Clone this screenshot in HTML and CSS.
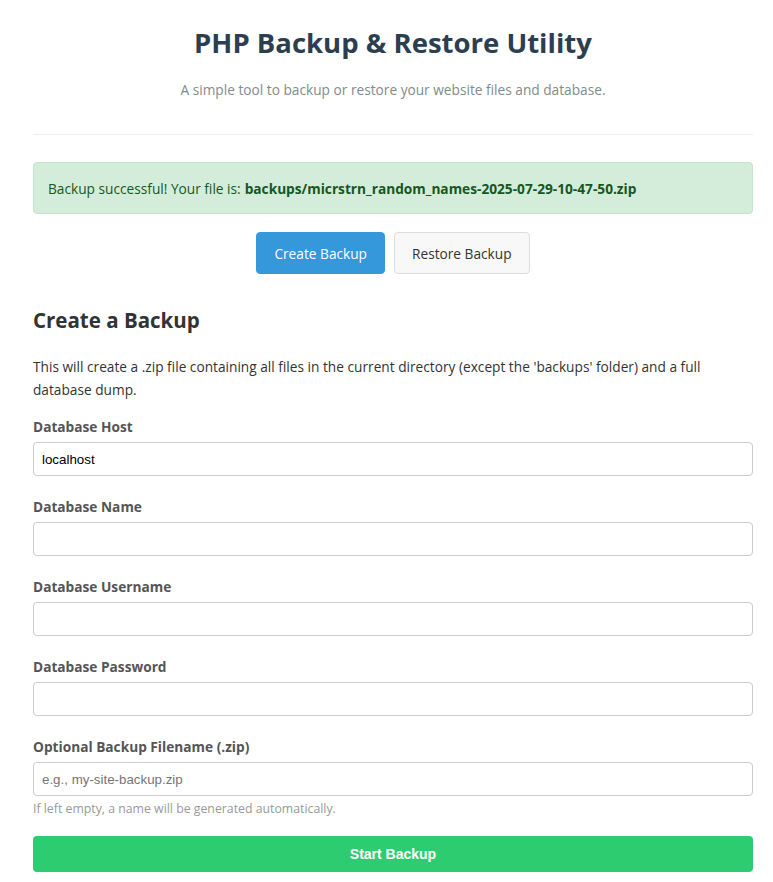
FILE: index.html
```html
<!DOCTYPE html>
<html lang="en">
<head>
<meta charset="utf-8">
<title>PHP Backup &amp; Restore Utility</title>
<link rel="stylesheet" href="styles.css">
</head>
<body>
<div class="container">
  <header class="header">
    <h1 class="title">PHP Backup &amp; Restore Utility</h1>
    <p class="subtitle">A simple tool to backup or restore your website files and database.</p>
  </header>

  <div class="alert">Backup successful! Your file is: <strong>backups/micrstrn_random_names-2025-07-29-10-47-50.zip</strong></div>

  <div class="tabs">
    <button class="tab tab-active" type="button">Create Backup</button>
    <button class="tab" type="button">Restore Backup</button>
  </div>

  <section class="panel">
    <h2 class="panel-title">Create a Backup</h2>
    <p class="panel-desc">This will create a .zip file containing all files in the current directory (except the 'backups' folder) and a full database dump.</p>
    <form class="form">
      <div class="field">
        <label class="label" for="host">Database Host</label>
        <input class="input" id="host" type="text" value="localhost">
      </div>
      <div class="field">
        <label class="label" for="name">Database Name</label>
        <input class="input" id="name" type="text">
      </div>
      <div class="field">
        <label class="label" for="user">Database Username</label>
        <input class="input" id="user" type="text">
      </div>
      <div class="field">
        <label class="label" for="pass">Database Password</label>
        <input class="input" id="pass" type="password">
      </div>
      <div class="field field-last">
        <label class="label" for="file">Optional Backup Filename (.zip)</label>
        <input class="input" id="file" type="text" placeholder="e.g., my-site-backup.zip">
        <small class="hint">If left empty, a name will be generated automatically.</small>
      </div>
      <button class="submit" type="button">Start Backup</button>
    </form>
  </section>
</div>
</body>
</html>
```
FILE: styles.css
```css
* { box-sizing: border-box; }
html, body { margin: 0; background: #fff; }
body {
  font-family: "Open Sans", "Noto Sans", sans-serif;
  color: #333;
  font-size: 13.7px;
}
.container {
  padding: 0 20px 0 33px;
}
.header {
  text-align: center;
  padding-top: 24px;
  padding-bottom: 34px;
  border-bottom: 1px solid #eee;
}
.title {
  margin: 0;
  font-size: 27.5px;
  font-weight: 700;
  color: #2c3e50;
  line-height: 38px;
}
.subtitle {
  margin: 18px 0 0;
  color: #7f8c8d;
  font-size: 13.7px;
  line-height: 20px;
}
.alert {
  margin-top: 27px;
  background: #d4edda;
  border: 1px solid #c3e6cb;
  color: #155724;
  border-radius: 4px;
  padding: 0 14px;
  height: 52px;
  display: flex;
  align-items: center;
  font-size: 13.7px;
}
.alert strong { margin-left: 4px; }
.tabs {
  display: flex;
  justify-content: center;
  gap: 9px;
  margin-top: 18px;
}
.tab {
  font-family: inherit;
  font-size: 13.7px;
  height: 42px;
  padding: 0 17px;
  border-radius: 4px;
  border: 1px solid #ddd;
  background: #f8f8f8;
  color: #333;
}
.tab-active {
  background: #3498db;
  border-color: #3498db;
  color: #fff;
}
.panel-title {
  margin: 32px 0 0;
  font-size: 20.5px;
  line-height: 28px;
  font-weight: 700;
  color: #333;
}
.panel-desc {
  margin: 21px 0 0;
  line-height: 23px;
}
.form { margin-top: 16px; }
.field { margin-bottom: 21px; }
.label {
  display: block;
  font-weight: 700;
  color: #555;
  line-height: 20px;
  margin-bottom: 5px;
}
.input {
  display: block;
  width: 100%;
  height: 34px;
  border: 1px solid #ccc;
  border-radius: 4px;
  padding: 0 8px;
  font-family: "Liberation Sans", Arial, sans-serif;
  font-size: 13.33px;
  color: #000;
}
.input::placeholder { color: #757575; }
.field-last { margin-bottom: 19px; }
.hint {
  display: block;
  color: #999;
  font-size: 12.3px;
  line-height: 16px;
  margin-top: 5px;
}
.submit {
  display: block;
  width: 100%;
  height: 36px;
  border: 0;
  border-radius: 4px;
  background: #2ecc71;
  color: #fff;
  font-family: "Liberation Sans", Arial, sans-serif;
  font-weight: 700;
  font-size: 14px;
}
```
